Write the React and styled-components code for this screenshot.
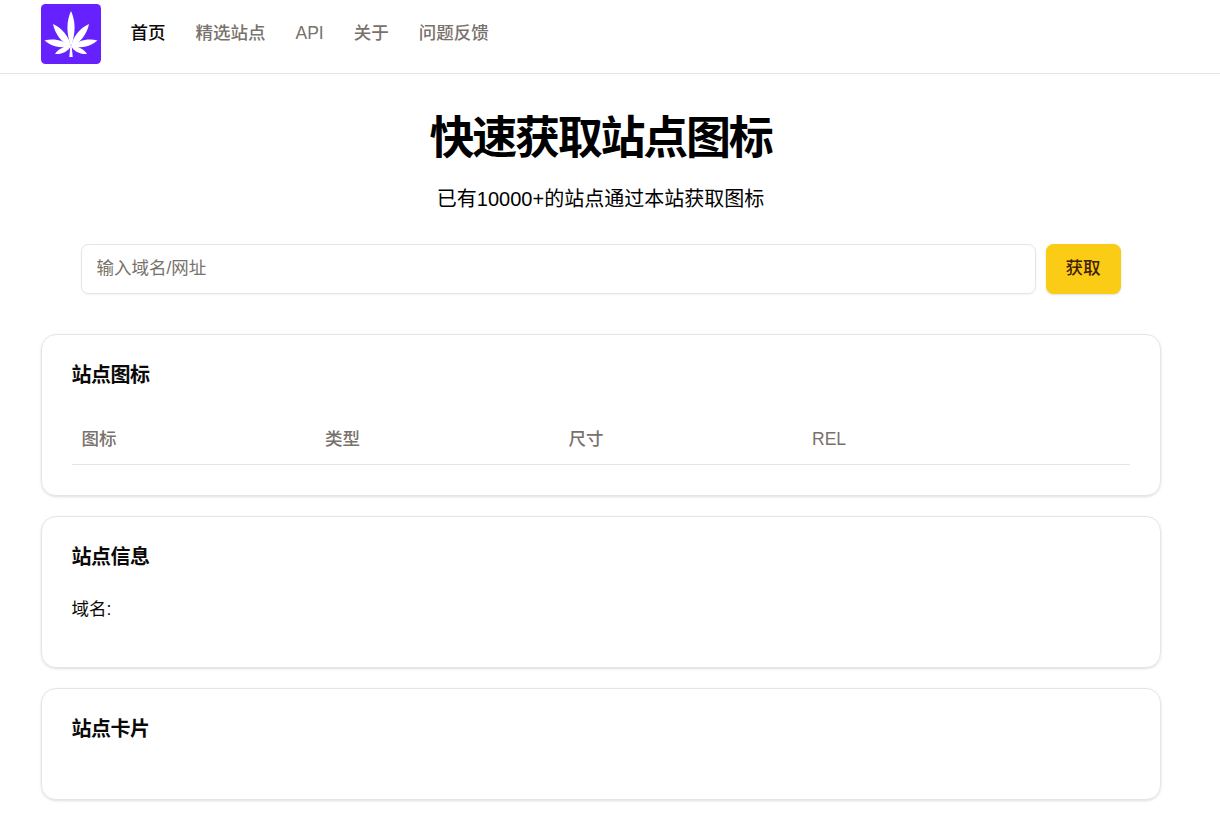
import React from 'react';
import styled, { createGlobalStyle } from 'styled-components';

const GlobalStyle = createGlobalStyle`
  *, *::before, *::after {
    box-sizing: border-box;
  }
  body {
    margin: 0;
    min-height: 100vh;
    background: #fff;
    color: #0c0a09;
    font-family: 'Liberation Sans', 'Noto Sans CJK SC', sans-serif;
    font-size: 17.5px;
    line-height: 25px;
  }
`

const Header = styled.header`
  height: 74px;
  padding: 4px 40.5px 0;
  display: flex;
  align-items: flex-start;
  border-bottom: 1px solid #e5e5e5;
`

const Logo = styled.svg`
  display: block;
  width: 60px;
  height: 60px;
  margin-right: 30px;
`

const Nav = styled.nav`
  display: flex;
  gap: 30px;
  padding-top: 17px;
`

const NavItem = styled.a`
  font-weight: 500;
  cursor: pointer;
  color: ${(props) => (props.$active ? '#0c0a09' : '#78716c')};
`

const Main = styled.main`
  width: 1120px;
  margin-left: 40.5px;
`

const Hero = styled.section`
  padding: 40px 40px 40px;
  text-align: center;
`

const Title = styled.h1`
  margin: 0;
  color: #000;
  font-size: 45px;
  line-height: 50px;
  font-weight: 700;
  letter-spacing: -0.05em;
`

const Subtitle = styled.p`
  margin: 20px 0 30px;
  color: #000;
  font-size: 20px;
  line-height: 30px;
`

const SearchForm = styled.form`
  display: flex;
  gap: 10px;
`

const Input = styled.input`
  flex: 1;
  height: 50px;
  padding: 5px 15px 6px;
  border: 1px solid #e5e5e5;
  border-radius: 7.5px;
  box-shadow: 0 1px 2px rgba(0, 0, 0, 0.05);
  font: inherit;
  outline: none;
  &::placeholder {
    color: #78716c;
  }
`

const Button = styled.button`
  height: 50px;
  padding: 0 20px 1px;
  border: none;
  border-radius: 7.5px;
  background: #facc15;
  color: #422006;
  box-shadow: 0 1px 3px rgba(0, 0, 0, 0.1), 0 1px 2px -1px rgba(0, 0, 0, 0.1);
  font: inherit;
  font-weight: 500;
  cursor: pointer;
`

const Cards = styled.div`
  display: flex;
  flex-direction: column;
  gap: 20px;
`

const Card = styled.section`
  height: ${(props) => props.$height}px;
  padding: 30px;
  border: 1px solid #e5e5e5;
  border-radius: 15px;
  box-shadow: 0 1px 3px rgba(0, 0, 0, 0.1), 0 1px 2px -1px rgba(0, 0, 0, 0.1);
`

const CardTitle = styled.h3`
  margin: 0;
  font-size: 20px;
  line-height: 20px;
  font-weight: 600;
  letter-spacing: -0.025em;
`

const TableHead = styled.div`
  display: grid;
  grid-template-columns: 243.5px 243.5px 243.5px 1fr;
  height: 50px;
  margin-top: 30px;
  padding-top: 12px;
  border-bottom: 1px solid #e5e5e5;
`

const HeadCell = styled.div`
  padding: 0 10px;
  color: #78716c;
  font-weight: 500;
`

const InfoRow = styled.div`
  margin-top: 30px;
`

const LeafLogo = () => (
  <Logo viewBox="0 0 60 60">
    <rect width="60" height="60" rx="4.5" fill="#6522ff" />
    <g fill="#fff">
      <path d="M30 43 C25 28 25.500 17 30 7 C34.500 17 35 28 30 43Z" />
      <path d="M30 43 C20 38 14 30 12 20 C21 24 28 32 30 43Z" />
      <path d="M30 43 C40 38 46 30 48 20 C39 24 32 32 30 43Z" />
      <path d="M30 43 C19 44.500 10 42 3.500 36.500 C12 34 23 36 30 43Z" />
      <path d="M30 43 C41 44.500 50 42 56.500 36.500 C48 34 37 36 30 43Z" />
      <path d="M30 42 C27 47.500 21 50.500 14 50 C17 45 23 42 30 42Z" />
      <path d="M30 42 C33 47.500 39 50.500 46 50 C43 45 37 42 30 42Z" />
      <path d="M29.300 42 h1.400 l1 11 h-3.400Z" />
    </g>
  </Logo>
)

const App = () => {
  return (
    <>
      <GlobalStyle />
      <Header>
        <LeafLogo />
        <Nav>
          <NavItem $active>首页</NavItem>
          <NavItem>精选站点</NavItem>
          <NavItem>API</NavItem>
          <NavItem>关于</NavItem>
          <NavItem>问题反馈</NavItem>
        </Nav>
      </Header>
      <Main>
        <Hero>
          <Title>快速获取站点图标</Title>
          <Subtitle>已有10000+的站点通过本站获取图标</Subtitle>
          <SearchForm>
            <Input placeholder="输入域名/网址" />
            <Button type="button">获取</Button>
          </SearchForm>
        </Hero>
        <Cards>
          <Card $height={162}>
            <CardTitle>站点图标</CardTitle>
            <TableHead>
              <HeadCell>图标</HeadCell>
              <HeadCell>类型</HeadCell>
              <HeadCell>尺寸</HeadCell>
              <HeadCell>REL</HeadCell>
            </TableHead>
          </Card>
          <Card $height={152}>
            <CardTitle>站点信息</CardTitle>
            <InfoRow>域名:</InfoRow>
          </Card>
          <Card $height={112}>
            <CardTitle>站点卡片</CardTitle>
          </Card>
        </Cards>
      </Main>
    </>
  )
}

export default App
